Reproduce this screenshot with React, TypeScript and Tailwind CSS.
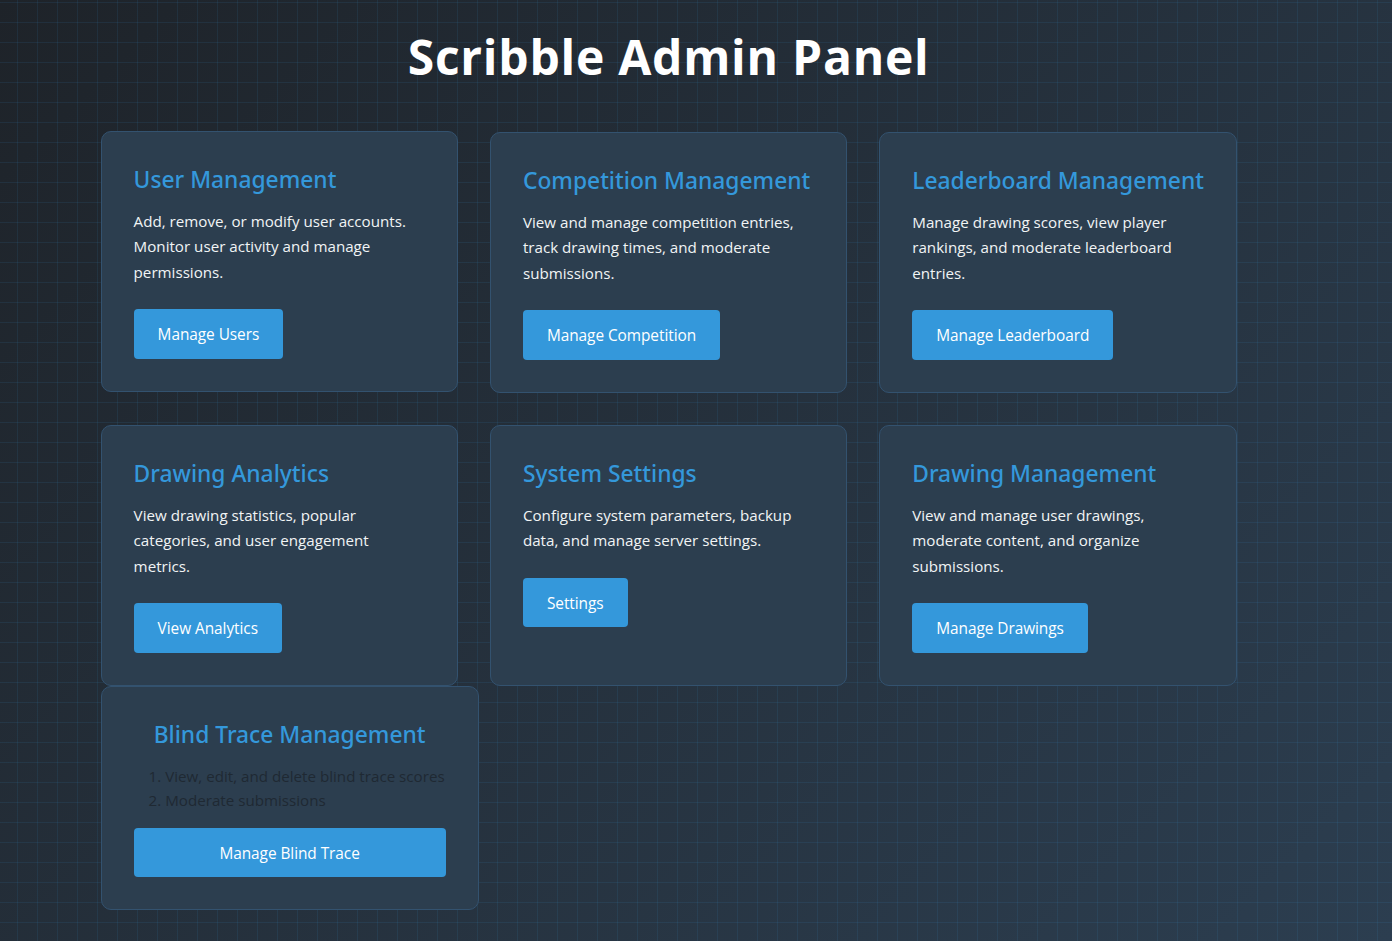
const cards = [
  {
    title: 'User Management',
    text: 'Add, remove, or modify user accounts. Monitor user activity and manage permissions.',
    button: 'Manage Users',
    lifted: true,
  },
  {
    title: 'Competition Management',
    text: 'View and manage competition entries, track drawing times, and moderate submissions.',
    button: 'Manage Competition',
  },
  {
    title: 'Leaderboard Management',
    text: 'Manage drawing scores, view player rankings, and moderate leaderboard entries.',
    button: 'Manage Leaderboard',
  },
  {
    title: 'Drawing Analytics',
    text: 'View drawing statistics, popular categories, and user engagement metrics.',
    button: 'View Analytics',
  },
  {
    title: 'System Settings',
    text: 'Configure system parameters, backup data, and manage server settings.',
    button: 'Settings',
  },
  {
    title: 'Drawing Management',
    text: 'View and manage user drawings, moderate content, and organize submissions.',
    button: 'Manage Drawings',
  },
];

export default function App() {
  return (
    <div className="min-h-screen bg-[linear-gradient(135deg,#1e2329,#2c3e50)] font-['Open_Sans','Noto_Sans',sans-serif]">
      <div className="min-h-[941px] bg-[image:linear-gradient(rgba(52,152,219,0.1)_1px,transparent_1px),linear-gradient(90deg,rgba(52,152,219,0.1)_1px,transparent_1px)] bg-[size:20px_20px] bg-[position:17px_2px] pl-[100.6px] pt-[25px]">
        <div className="w-[1136px]">
          <h1 className="mb-[44px] text-center text-[48px] leading-[63px] font-bold tracking-[0.75px] text-white">
            Scribble Admin Panel
          </h1>

          <div className="grid grid-cols-3 gap-8">
            {cards.map((card) => (
              <div
                key={card.title}
                className={`h-[261px] rounded-[10px] border border-[#33526f] bg-[#2c3e4f] p-8 ${
                  card.lifted ? '-translate-y-px' : ''
                }`}
              >
                <h2 className="mb-[13.6px] font-['Noto_Sans',sans-serif] text-[22.8px] leading-[31px] font-medium whitespace-nowrap text-[#3498db]">
                  {card.title}
                </h2>
                <p className="mb-[24px] text-[15.16px] leading-[25.6px] text-[#f1f4f5]">{card.text}</p>
                <button className="rounded-[4px] bg-[#3498db] px-6 pt-[13px] pb-[11px] text-[15.4px] leading-[25.4px] tracking-[-0.05px] text-white">
                  {card.button}
                </button>
              </div>
            ))}
          </div>

          {/* Blind trace sits right under the grid, no gap */}
          <div className="w-[378px] rounded-[10px] border border-[#33526f] bg-[#2c3e4f] p-8">
            <h2 className="mb-[14px] text-center font-['Noto_Sans',sans-serif] text-[22.8px] leading-[31px] font-medium whitespace-nowrap text-[#3498db]">
              Blind Trace Management
            </h2>
            <ol className="mb-[16px] list-inside list-decimal pl-[15px] text-[15.16px] leading-[24px] whitespace-nowrap text-[#1f2933]">
              <li>View, edit, and delete blind trace scores</li>
              <li>Moderate submissions</li>
            </ol>
            <button className="w-full rounded-[4px] bg-[#3498db] px-6 pt-[13px] pb-[11px] text-[15.4px] leading-[25px] tracking-[-0.05px] text-white">
              Manage Blind Trace
            </button>
          </div>
        </div>
      </div>
    </div>
  );
}
